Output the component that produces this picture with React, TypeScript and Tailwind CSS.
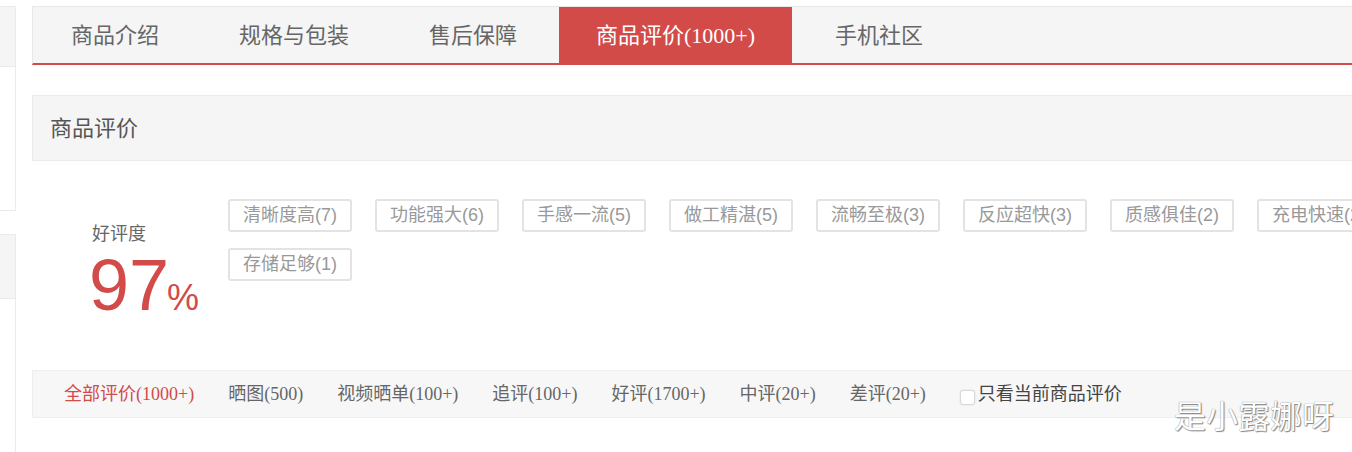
import React from "react";

const tabs = ["商品介绍", "规格与包装", "售后保障", "商品评价(1000+)", "手机社区"];
const tags = [
  "清晰度高(7)",
  "功能强大(6)",
  "手感一流(5)",
  "做工精湛(5)",
  "流畅至极(3)",
  "反应超快(3)",
  "质感俱佳(2)",
  "充电快速(2)",
  "存储足够(1)",
];
const filters = [
  "全部评价(1000+)",
  "晒图(500)",
  "视频晒单(100+)",
  "追评(100+)",
  "好评(1700+)",
  "中评(20+)",
  "差评(20+)",
];

const tabClass = [
  "pl-[38px] pr-[40px] flex items-center text-[#666]",
  "px-[40px] flex items-center text-[#666]",
  "px-[40px] flex items-center text-[#666]",
  "ml-[2px] px-[37px] flex items-center bg-[#d24b48] text-white",
  "pl-[43px] pr-[40px] flex items-center text-[#666]",
];

export default function App() {
  return (
    <div className="relative w-[1352px] h-[452px] overflow-hidden bg-white flex pt-[6px]">
      {/* left sidebar */}
      <div className="w-[16px] shrink-0 flex flex-col">
        <div className="h-[205px] border-t border-r border-b border-[#ebebeb] flex flex-col">
          <div className="h-[60px] bg-[#f5f5f5] border-b border-[#ebebeb]" />
        </div>
        <div className="mt-[23px] flex-1 border-t border-r border-[#ebebeb] flex flex-col">
          <div className="h-[64px] bg-[#f5f5f5] border-b border-[#ebebeb]" />
        </div>
      </div>

      {/* main */}
      <div className="ml-[16px] w-[1400px] shrink-0 flex flex-col">
        {/* tab bar */}
        <div className="h-[59px] flex border-t border-l border-[#e8e8e8] border-b-2 border-b-[#d24b48] bg-[#f5f5f5] font-['Liberation_Serif','Noto_Sans_CJK_SC',serif] text-[22px]">
          {tabs.map((t, i) => (
            <div key={t} className={tabClass[i]}>
              {t}
            </div>
          ))}
        </div>

        {/* section header */}
        <div className="mt-[30px] h-[66px] border border-[#ebebeb] bg-[#f5f5f5] flex items-center pl-[17px] font-['Liberation_Serif','Noto_Sans_CJK_SC',serif] text-[22px] text-[#555]">
          商品评价
        </div>

        {/* rating area */}
        <div className="h-[209px] flex">
          <div className="w-[196px] shrink-0 pl-[57px] pt-[61px] flex flex-col font-['Liberation_Sans','Noto_Sans_CJK_SC',sans-serif]">
            <div className="ml-[3px] text-[18px] leading-[24px] text-[#666]">好评度</div>
            <div className="mt-[3px] flex items-baseline text-[#d24b48]">
              <span className="text-[72px] leading-none">97</span>
              <span className="-ml-[2px] text-[36px] leading-none">%</span>
            </div>
          </div>
          <div className="flex-1 pt-[38px] flex flex-wrap content-start gap-x-[23px] gap-y-[16px] font-['Liberation_Sans','Noto_Sans_CJK_SC',sans-serif]">
            {tags.map((t) => (
              <div
                key={t}
                className="h-[33px] px-[13px] border-2 border-[#e3e3e3] rounded-[3px] flex items-center text-[18px] text-[#999] whitespace-nowrap"
              >
                {t}
              </div>
            ))}
          </div>
        </div>

        {/* filter bar */}
        <div className="h-[48px] border border-[#eeeeee] bg-[#f7f7f7] flex items-center pl-[31px] gap-[34px] font-['Liberation_Serif','Noto_Sans_CJK_SC',serif] text-[18px] whitespace-nowrap">
          {filters.map((f, i) => (
            <span key={f} className={i === 0 ? "text-[#d24b48]" : "text-[#666]"}>
              {f}
            </span>
          ))}
          <div className="flex items-center">
            <span className="mt-[6px] w-[15px] h-[15px] rounded-[3px] border border-[#d8d8d8] bg-white shadow-[0_0_2px_rgba(0,0,0,0.12)]" />
            <span className="ml-[3px] text-[#444]">只看当前商品评价</span>
          </div>
        </div>
      </div>

      {/* watermark */}
      <div className="absolute left-[1174px] top-[398px] text-[32px] leading-none text-white font-['Noto_Sans_CJK_SC',sans-serif] [text-shadow:0_0_1px_#666,1px_1px_1px_#888]">
        是小露娜呀
      </div>
    </div>
  );
}
